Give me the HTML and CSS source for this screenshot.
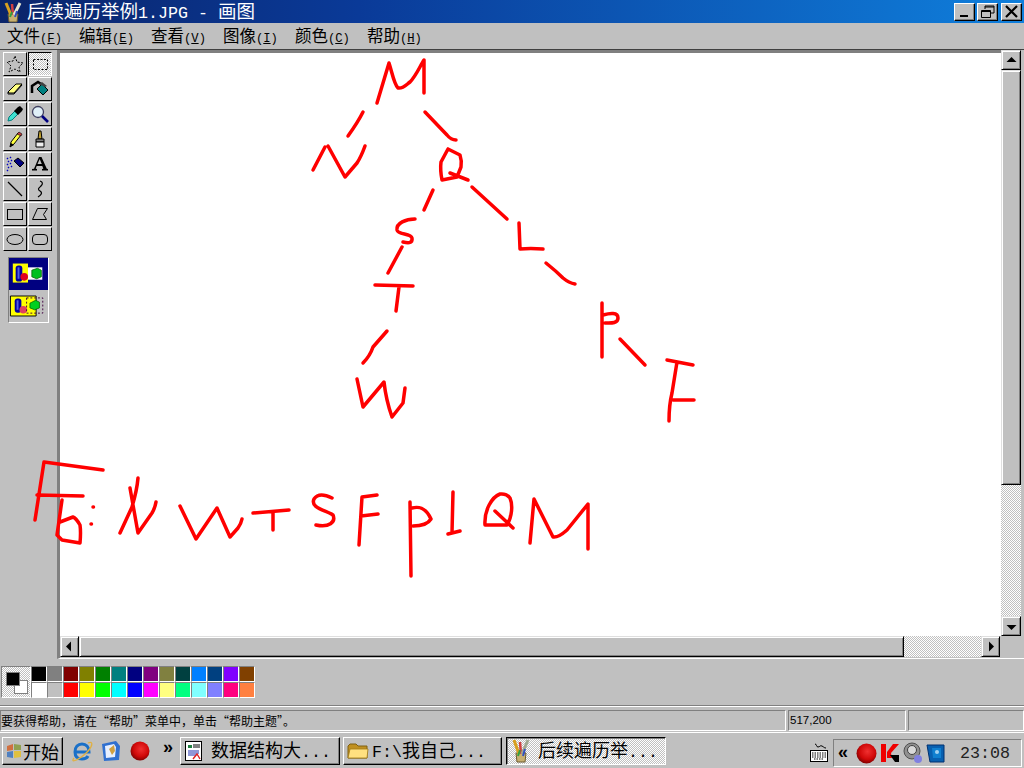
FILE: index.html
```html
<!DOCTYPE html>
<html lang="zh-CN">
<head>
<meta charset="utf-8">
<title>后续遍历举例1.JPG - 画图</title>
<link rel="stylesheet" href="styles.css">
</head>
<body>
<div class="app">
  <header class="titlebar">
    <svg class="title-icon" width="20" height="22" viewBox="0 0 20 22"><path d="M5 13h10l-1 8H6z" fill="#c8b070" stroke="#6a5a30"/><path d="M8 14L3 2" stroke="#d8a020" stroke-width="3"/><path d="M10 14L9 3" stroke="#d04040" stroke-width="2.5"/><path d="M11 14L17 2" stroke="#e8e8d0" stroke-width="3"/><path d="M7 16l2-5" stroke="#30a040" stroke-width="2"/><path d="M12 16l2-6" stroke="#3050c0" stroke-width="2"/></svg>
    <div class="title-text">后续遍历举例<span class="lat-title">1.JPG - </span>画图</div>
    <div class="win-buttons">
      <div class="win-btn"><svg width="19" height="16" viewBox="0 0 19 16"><rect x="5" y="11" width="8" height="2"/></svg></div>
      <div class="win-btn"><svg width="19" height="16" viewBox="0 0 19 16"><path d="M7 2h9v7h-3M7 2v3M7 3h9" fill="none" stroke="#000"/><path d="M3.5 6.5h9v7h-9zM3.5 7.5h9" fill="none" stroke="#000"/></svg></div>
      <div class="win-btn"><svg width="19" height="16" viewBox="0 0 19 16"><path d="M4 2l11 11M15 2L4 13" stroke="#000" stroke-width="2.2"/></svg></div>
    </div>
  </header>

  <nav class="menubar">
    <span>文件<span class="lat-menu">(<u>F</u>)</span></span>
    <span>编辑<span class="lat-menu">(<u>E</u>)</span></span>
    <span>查看<span class="lat-menu">(<u>V</u>)</span></span>
    <span>图像<span class="lat-menu">(<u>I</u>)</span></span>
    <span>颜色<span class="lat-menu">(<u>C</u>)</span></span>
    <span>帮助<span class="lat-menu">(<u>H</u>)</span></span>
  </nav>

  <main class="work">
    <aside class="toolbox">
      <div class="tools">
        <div class="tool"><svg width="20" height="20" viewBox="0 0 20 20"><path d="M10 2l2 6 6 1-4 4 1 5-5-3-6 3 2-6-4-4 6-1z" fill="none" stroke="#000" stroke-dasharray="2 1.5"/></svg></div>
        <div class="tool tool-on"><svg width="20" height="20" viewBox="0 0 20 20"><rect x="3.5" y="5.5" width="14" height="10" fill="none" stroke="#000" stroke-dasharray="2 1.5"/></svg></div>
        <div class="tool"><svg width="20" height="20" viewBox="0 0 20 20"><path d="M3 13l8-8h6l-8 9H4z" fill="#ffff80" stroke="#000"/><path d="M3 13v2h6l8-9" fill="none" stroke="#000"/></svg></div>
        <div class="tool"><svg width="20" height="20" viewBox="0 0 20 20"><path d="M2 14V7l6-4 3 2" fill="none" stroke="#000" stroke-width="2.5"/><path d="M7 10l5-5 6 6-5 5z" fill="#008080" stroke="#000"/><path d="M9 5l3-2 5 4-2 1z" fill="#404040"/></svg></div>
        <div class="tool"><svg width="20" height="20" viewBox="0 0 20 20"><path d="M3 17l1-4 6-6 3 3-6 6z" fill="#40e0d0" stroke="#008080"/><path d="M9 7l4-4 2-1 3 3-1 2-4 4z" fill="#000"/></svg></div>
        <div class="tool"><svg width="20" height="20" viewBox="0 0 20 20"><circle cx="8" cy="8" r="5.5" fill="#e0f0f8" stroke="#404060" stroke-width="1.3"/><path d="M12 12l6 6" stroke="#000080" stroke-width="2.6"/></svg></div>
        <div class="tool"><svg width="20" height="20" viewBox="0 0 20 20"><path d="M5 18l1-5 7-9 3 2-7 9z" fill="#ffff40" stroke="#000"/><path d="M5 18l1-4 3 2z" fill="#000"/><path d="M12 5l2-2 3 2-1 2z" fill="#c04040" stroke="#000" stroke-width=".6"/></svg></div>
        <div class="tool"><svg width="20" height="20" viewBox="0 0 20 20"><path d="M9 2h2l1 8H8z" fill="#c0a030" stroke="#000"/><path d="M6 10h8v3H6z" fill="#808080" stroke="#000"/><path d="M6 13h8v5H6z" fill="#f0f0f0" stroke="#000"/></svg></div>
        <div class="tool"><svg width="20" height="20" viewBox="0 0 20 20"><path d="M9 7l4-3 6 5-4 4z" fill="#000080" stroke="#000"/><path d="M2 4l1 1M5 3l1 1M3 7l1 1M6 6l1 1M2 10l1 1M5 9l1 1M3 13l1 1M6 12l1 1M2 16l1 1" stroke="#0000c0" stroke-width="1.4"/></svg></div>
        <div class="tool"><svg width="20" height="20" viewBox="0 0 20 20"><path d="M2 16.500h5v-1.500l-1.300-.2 1-2.800h5.600l1 2.800-1.300.2v1.500h6v-1.500l-1.200-.2L11.500 3H9L4 14.800l-2 .2zM7.500 10L9.700 5l2.100 5z" fill="#000"/></svg></div>
        <div class="tool"><svg width="20" height="20" viewBox="0 0 20 20"><path d="M3 3l14 14" stroke="#000" stroke-width="1.2"/></svg></div>
        <div class="tool"><svg width="20" height="20" viewBox="0 0 20 20"><path d="M10 2c3 1 3 3 1 5s-4 3-1 5 1 4-2 6" fill="none" stroke="#000" stroke-width="1.200"/></svg></div>
        <div class="tool"><svg width="20" height="20" viewBox="0 0 20 20"><rect x="2.500" y="5.500" width="15" height="10" fill="none" stroke="#000"/></svg></div>
        <div class="tool"><svg width="20" height="20" viewBox="0 0 20 20"><path d="M7.500 4.500h10l-4 6 3 5H2.500z" fill="none" stroke="#000"/></svg></div>
        <div class="tool"><svg width="20" height="20" viewBox="0 0 20 20"><ellipse cx="10" cy="10.500" rx="8" ry="5" fill="none" stroke="#000"/></svg></div>
        <div class="tool"><svg width="20" height="20" viewBox="0 0 20 20"><rect x="2.500" y="5.500" width="15" height="10" rx="3.500" fill="none" stroke="#000"/></svg></div>
      </div>
      <div class="options">
        <div class="opt opt-on">
          <svg width="41" height="30" viewBox="0 0 41 30"><path d="M4 4h16v20H4z" fill="#ffff00"/><rect x="7" y="6" width="7" height="17" rx="3" fill="#0000a0"/><rect x="9" y="8" width="2" height="12" fill="#5060e0"/><circle cx="16" cy="18" r="4" fill="#e00020"/><path d="M20 8h15v13H20z" fill="#fff"/><path d="M24 11l6-2 4 2v7l-5 2-5-2z" fill="#00c020" stroke="#006000" stroke-width=".8"/></svg>
        </div>
        <div class="opt">
          <svg width="41" height="30" viewBox="0 0 41 30"><path d="M1.500 4.500h27v21h-27z" fill="#ffff00" stroke="#000"/><rect x="6" y="7" width="7" height="15" rx="3" fill="#0000a0"/><rect x="8" y="9" width="2" height="10" fill="#5060e0"/><circle cx="15" cy="19" r="4" fill="#e04060"/><path d="M18.500 6.500h17v16h-17z" fill="none" stroke="#400040" stroke-dasharray="2 2"/><path d="M22 12l6-3 4 2v6l-5 2-5-2z" fill="#00d020" stroke="#006000" stroke-width=".8"/></svg>
        </div>
      </div>
    </aside>

    <section class="pane">
      <div class="pane-top">
        <div class="canvas"></div>
        <div class="vscroll">
          <div class="sb-btn"><svg width="17" height="17" viewBox="0 0 17 17"><path d="M8.500 5l5 5h-10z"/></svg></div>
          <div class="sb-thumb-v"></div>
          <div class="sb-track"></div>
          <div class="sb-btn"><svg width="17" height="17" viewBox="0 0 17 17"><path d="M8.500 12l-5-5h10z"/></svg></div>
        </div>
      </div>
      <div class="hscroll">
        <div class="sb-btn sb-btn-h"><svg width="17" height="17" viewBox="0 0 17 17"><path d="M5 8.500l5-5v10z"/></svg></div>
        <div class="sb-thumb-h"></div>
        <div class="sb-track"></div>
        <div class="sb-btn sb-btn-h"><svg width="17" height="17" viewBox="0 0 17 17"><path d="M12 8.500l-5-5v10z"/></svg></div>
      </div>
    </section>
  </main>

  <section class="palette">
    <div class="current"><i class="cur-bg"></i><i class="cur-fg"></i></div>
    <div class="swatches">
      <i class="c1"></i><i class="c2"></i><i class="c3"></i><i class="c4"></i><i class="c5"></i><i class="c6"></i><i class="c7"></i><i class="c8"></i><i class="c9"></i><i class="c10"></i><i class="c11"></i><i class="c12"></i><i class="c13"></i><i class="c14"></i>
      <i class="c15"></i><i class="c16"></i><i class="c17"></i><i class="c18"></i><i class="c19"></i><i class="c20"></i><i class="c21"></i><i class="c22"></i><i class="c23"></i><i class="c24"></i><i class="c25"></i><i class="c26"></i><i class="c27"></i><i class="c28"></i>
    </div>
  </section>

  <footer class="status">
    <div class="st st-main">要获得帮助&#65292;请在“帮助”菜单中&#65292;单击“帮助主题”。</div>
    <div class="st st-pos">517,200</div>
    <div class="st st-size"></div>
  </footer>

  <div class="taskbar">
    <button class="start">
      <svg width="18" height="18" viewBox="0 0 18 18"><path d="M2 4l6-2v6l-6 1z" fill="#d07040"/><path d="M9 2l7 1v5H9z" fill="#90a050"/><path d="M2 10l6-1v7l-6-1z" fill="#5080c0"/><path d="M9 9h7v6l-7 1z" fill="#e0c040"/></svg>
      <span>开始</span>
    </button>
    <div class="quick">
      <svg width="22" height="24" viewBox="0 0 22 24"><path d="M5 13h13c0-5-3-8-7-8s-7 3-7 8 3 7 7 7c3 0 5-1 6-3" fill="none" stroke="#1a70c8" stroke-width="3"/><path d="M3 19C-1 24 6 22 14 15S23 1 17 4" fill="none" stroke="#e0b040" stroke-width="1.300"/></svg>
      <svg width="22" height="24" viewBox="0 0 22 24"><path d="M2 5l14-3 4 5-1 14-15 1z" fill="#3070d0"/><path d="M5 7l9-2 2 3-1 10-9 1z" fill="#e8f0ff"/><path d="M9 10l5-4 1 6-3 4z" fill="#d0a040"/></svg>
      <svg width="22" height="24" viewBox="0 0 22 24"><circle cx="11" cy="12" r="9.500" fill="url(#ball)"/><defs><radialGradient id="ball" cx=".55" cy=".4" r=".65"><stop offset="0" stop-color="#f03030"/><stop offset=".6" stop-color="#d00808"/><stop offset="1" stop-color="#700000"/></radialGradient></defs></svg>
    </div>
    <div class="chev">»</div>
    <button class="task task-1">
      <svg width="18" height="20" viewBox="0 0 18 20"><rect x=".5" y=".5" width="16" height="19" fill="#fff" stroke="#000"/><path d="M3 4h4v3H3z" fill="#208040"/><path d="M8 4h7M8 6h7" stroke="#000"/><path d="M3 10h11M3 12h11M3 14h8" stroke="#2030b0" stroke-width="1.200"/><path d="M8 18l4-5 3 5" fill="none" stroke="#e02020" stroke-width="1.400"/></svg>
      <span>数据结构大<span class="lat-task">...</span></span>
    </button>
    <button class="task task-2">
      <svg width="22" height="18" viewBox="0 0 22 18"><path d="M1 4l2-2h6l2 2h9v12H1z" fill="#c09020" stroke="#806010"/><path d="M1 16l2-9h18l-1 9z" fill="#ffe080" stroke="#a07818" stroke-width=".8"/></svg>
      <span class="task-label-tight"><span class="lat-task">F:\</span>我自己<span class="lat-task">...</span></span>
    </button>
    <button class="task task-3">
      <svg width="20" height="26" viewBox="0 0 20 26"><path d="M5 15h10l-1 9H6z" fill="#c8b070" stroke="#6a5a30"/><path d="M8 16L3 2" stroke="#d8a020" stroke-width="3"/><path d="M10 16L9 4" stroke="#d04040" stroke-width="2.500"/><path d="M11 16l6-14" stroke="#a0a890" stroke-width="3"/><path d="M7 18l2-6" stroke="#30a040" stroke-width="2"/><path d="M12 18l2-7" stroke="#3050c0" stroke-width="2"/></svg>
      <span>后续遍历举<span class="lat-task">...</span></span>
    </button>
    <div class="spring"></div>
    <svg class="kbd" width="18" height="20" viewBox="0 0 18 20"><path d="M5 1c2 0 1 3 3 3s2-2 4-1 2 2 4 2" fill="none" stroke="#000"/><rect x=".5" y="7.500" width="17" height="11" fill="#fff" stroke="#000"/><path d="M2 10h14M2 12h14M2 14h14M4 16h10" stroke="#000" stroke-dasharray="1.500 1"/></svg>
    <div class="tray">
      <span class="tray-chev">«</span>
      <svg width="21" height="21" viewBox="0 0 21 21"><circle cx="10.500" cy="10.500" r="10" fill="url(#ball)"/></svg>
      <svg width="20" height="20" viewBox="0 0 20 20"><path d="M1 1h5v18H1zM7 9l6-8h6l-8 9 1 5H7z" fill="#f00000"/><path d="M10 12h9v7h-4z" fill="#000"/></svg>
      <svg width="20" height="22" viewBox="0 0 20 22"><circle cx="9" cy="9" r="8" fill="#909090" stroke="#505050"/><circle cx="9" cy="8" r="4.500" fill="#d8d8d8" stroke="#404040"/><circle cx="15" cy="17" r="4" fill="#8080e0"/></svg>
      <svg width="20" height="22" viewBox="0 0 20 22"><path d="M1 3h17v17H4z" fill="#0860b0" stroke="#003070"/><path d="M6 6h9v10H7z" fill="#1080d0"/><circle cx="11" cy="10" r="2" fill="#a0d0f0"/></svg>
      <span class="clock">23:08</span>
    </div>
  </div>

  <svg class="ink" width="1024" height="768" viewBox="0 0 1024 768">
    <path d="M377 103L389 63C392 72 394 84 398 88 403 89 406 85 410 82 416 76 420 66 424 60L424 93"/>
    <path d="M363 112Q358 122 348 136"/>
    <path d="M425 112L447 135Q451 140 456 140"/>
    <path d="M313 170L325 147M328 146L345 177 357 163Q361 157 365 146"/>
    <path d="M448 149L460 155Q462 161 461 167L457 177 442 180Q440 170 441 162L448 149M450 173L468 180"/>
    <path d="M433 190L424 210"/>
    <path d="M472 187L507 219"/>
    <path d="M415 219C406 219 396 223 397 230 398 235 411 233 412 238 413 244 407 243 403 242"/>
    <path d="M519 223L520 249Q530 248 543 249"/>
    <path d="M402 247L388 273"/>
    <path d="M375 285L413 286M399 287L396 311"/>
    <path d="M546 263Q556 271 563 278 569 283 575 284"/>
    <path d="M602 303L602 357M603 315C610 313 618 312 618 318 618 324 610 323 605 323"/>
    <path d="M620 339L645 365"/>
    <path d="M667 360L693 365M677 362L672 393Q669 405 669 421M673 400L694 400"/>
    <path d="M387 331L373 347Q370 356 363 363"/>
    <path d="M357 379L363 407 384 382Q386 400 392 417L403 403 405 388"/>
    <path d="M103 470L44 462 35 520M37 495L83 496"/>
    <path d="M62 500L57 535 62 540 80 543Q81 532 80 525 76 518 73 517L60 522"/>
    <path d="M93 507h.5M91 524h.5"/>
    <path d="M120 533L132 507Q137 490 138 478M130 488L138 533 152 513Q155 508 156 502"/>
    <path d="M180 506L196 539 217 508 230 537 238 528Q241 524 242 519"/>
    <path d="M253 513L289 510M273 512L273 530"/>
    <path d="M332 498C326 495 318 493 314 499 310 508 325 510 333 515 336 522 329 528 316 525"/>
    <path d="M377 495L362 497 359 545M361 516L378 514"/>
    <path d="M410 502L411 576M412 508C420 506 426 508 431 519 428 524 420 526 413 526"/>
    <path d="M453 492L452 533M448 534L460 531"/>
    <path d="M500 494C492 497 484 510 485 525L507 525C512 517 513 505 510 498 506 493 503 494 500 494M495 511L513 528"/>
    <path d="M530 543L534 499 553 537Q558 538 567 530L588 504 588 549"/>
  </svg>
</div>
</body>
</html>
```

FILE: styles.css
```css
* { box-sizing: border-box; }
html, body { margin: 0; padding: 0; }
body { background: #c0c0c0; overflow: hidden; }

.app {
  position: relative;
  width: 1024px;
  height: 768px;
  display: flex;
  flex-direction: column;
  overflow: hidden;
  background: #c0c0c0;
  color: #000;
  font-family: "Noto Sans CJK SC", "Liberation Sans", sans-serif;
}

/* ---- title bar ---- */
.titlebar {
  height: 23px;
  flex: none;
  display: flex;
  align-items: center;
  padding: 0 2px 0 3px;
  background: linear-gradient(90deg, #0a246a 0%, #0a3a98 35%, #0f7fdc 100%);
  color: #fff;
}
.title-icon { flex: none; }
.title-text {
  margin-left: 4px;
  font-size: 18.500px;
  line-height: 23px;
  white-space: pre;
}
.lat-title { font-family: "Liberation Mono", monospace; font-size: 16.670px; }
.win-buttons { margin-left: auto; display: flex; gap: 2px; }
.win-btn {
  width: 21px;
  height: 18px;
  background: #c0c0c0;
  border: 1px solid;
  border-color: #fff #000 #000 #fff;
  box-shadow: inset -1px -1px #808080;
  display: flex;
  align-items: center;
  justify-content: center;
}
.win-btn + .win-btn + .win-btn { margin-left: 1px; }

/* ---- menu ---- */
.menubar {
  height: 25px;
  flex: none;
  margin-top: 1px;
  display: flex;
  align-items: center;
  gap: 17px;
  padding-left: 7px;
  font-size: 16.500px;
  line-height: 24px;
  white-space: nowrap;
}
.lat-menu { font-family: "Liberation Mono", monospace; font-size: 12.200px; }

/* ---- work area ---- */
.work {
  height: 610px;
  flex: none;
  display: flex;
  border-top: 1px solid #404040;
}
.toolbox { width: 57px; flex: none; padding: 2px 0 0 3px; }
.tools {
  display: grid;
  grid-template-columns: 24px 24px;
  grid-auto-rows: 24px;
  gap: 1px;
  width: 49px;
}
.tool {
  background: #c0c0c0;
  border: 1px solid;
  border-color: #fff #000 #000 #fff;
  display: flex;
  align-items: center;
  justify-content: center;
}
.tool-on {
  border-color: #000 #fff #fff #000;
  background: repeating-conic-gradient(#fff 0 25%, #c0c0c0 0 50%) 0 0 / 2px 2px;
}
.options {
  width: 41px;
  margin: 6px 0 0 5px;
  height: 66px;
  border: 1px solid;
  border-color: #808080 #fff #fff #808080;
  display: flex;
  flex-direction: column;
}
.opt { height: 32px; display: flex; align-items: center; justify-content: center; }
.opt-on { background: #000080; }

.pane {
  flex: 1;
  display: flex;
  flex-direction: column;
  padding-bottom: 1px;
  border-left: 3px solid #808080;
  border-bottom: 1px solid #fff;
}
.pane-top { flex: 1; display: flex; min-height: 0; }
.canvas {
  width: 941px;
  flex: none;
  background: #fff;
  border-top: 3px solid #808080;
}
.vscroll { width: 20px; flex: none; display: flex; flex-direction: column; }
.sb-btn {
  height: 20px;
  flex: none;
  background: #c0c0c0;
  border: 1px solid;
  border-color: #dfdfdf #000 #000 #dfdfdf;
  box-shadow: inset 1px 1px #fff, inset -1px -1px #808080;
  display: flex;
  align-items: center;
  justify-content: center;
}
.sb-track {
  flex: 1;
  background: repeating-conic-gradient(#fff 0 25%, #c0c0c0 0 50%) 0 0 / 2px 2px;
}
.sb-thumb-v, .sb-thumb-h {
  flex: none;
  background: #c0c0c0;
  border: 1px solid;
  border-color: #dfdfdf #000 #000 #dfdfdf;
  box-shadow: inset 1px 1px #fff, inset -1px -1px #808080;
}
.sb-thumb-v { height: 415px; }
.sb-thumb-h { width: 825px; }
.hscroll { height: 21px; flex: none; display: flex; margin-right: 24px; }
.sb-btn-h { width: 19px; height: 21px; }

/* ---- palette ---- */
.palette {
  height: 47px;
  flex: none;
  display: flex;
  padding: 7px 0 0 1px;
  border-bottom: 1px solid #808080;
}
.current {
  position: relative;
  width: 30px;
  height: 32px;
  border: 1px solid;
  border-color: #808080 #fff #fff #808080;
  background: repeating-conic-gradient(#fff 0 25%, #c0c0c0 0 50%) 0 0 / 2px 2px;
}
.cur-bg, .cur-fg { position: absolute; display: block; width: 14px; height: 14px; }
.cur-bg { left: 12px; top: 13px; background: #fff; border: 1px solid #808080; }
.cur-fg { left: 4px; top: 5px; background: #000; border: 1px solid #808080; }
.swatches {
  display: grid;
  grid-template-columns: repeat(14, 16px);
  grid-auto-rows: 16px;
  height: 32px;
}
.swatches i {
  display: block;
  border: 1px solid;
  border-color: #808080 #fff #fff #808080;
}
.c1 { background: #000; } .c2 { background: #808080; } .c3 { background: #800000; } .c4 { background: #808000; }
.c5 { background: #008000; } .c6 { background: #008080; } .c7 { background: #000080; } .c8 { background: #800080; }
.c9 { background: #808040; } .c10 { background: #004040; } .c11 { background: #0080ff; } .c12 { background: #004080; }
.c13 { background: #8000ff; } .c14 { background: #804000; }
.c15 { background: #fff; } .c16 { background: #c0c0c0; } .c17 { background: #f00; } .c18 { background: #ff0; }
.c19 { background: #0f0; } .c20 { background: #0ff; } .c21 { background: #00f; } .c22 { background: #f0f; }
.c23 { background: #ffff80; } .c24 { background: #00ff80; } .c25 { background: #80ffff; } .c26 { background: #8080ff; }
.c27 { background: #ff0080; } .c28 { background: #ff8040; }

/* ---- status bar ---- */
.status {
  height: 26px;
  flex: none;
  display: flex;
  gap: 2px;
  padding-top: 3px;
  border-top: 1px solid #fff;
}
.st {
  height: 21px;
  border: 1px solid;
  border-color: #808080 #fff #fff #808080;
  font-size: 12px;
  line-height: 19px;
  white-space: nowrap;
}
.st-main { width: 786px; }
.st-pos { width: 118px; padding-left: 1px; font-family: "Liberation Sans", sans-serif; font-size: 11.500px; }
.st-size { flex: 1; }

/* ---- taskbar ---- */
.taskbar {
  flex: 1;
  display: flex;
  align-items: center;
  padding: 2px 2px 6px 2px;
  border-top: 1px solid #fff;
  font-size: 18px;
}
.start, .task {
  height: 28px;
  padding: 0;
  background: #c0c0c0;
  border: 1px solid;
  border-color: #fff #000 #000 #fff;
  box-shadow: inset -1px -1px #808080;
  display: flex;
  align-items: center;
  font: inherit;
  line-height: 26px;
  white-space: nowrap;
  color: #000;
}
.start { width: 61px; padding-left: 2px; gap: 0; }
.quick { display: flex; gap: 7px; margin-left: 8px; width: 92px; }
.chev { width: 15px; font-family: "Liberation Sans", sans-serif; font-weight: bold; font-size: 18px; line-height: 18px; margin-top: -8px; }
.task { gap: 8px; }
.task-1 { width: 160px; margin-left: 2px; padding-left: 4px; }
.task-2 { width: 159px; margin-left: 3px; padding-left: 3px; gap: 7px; }
.task-3 {
  width: 160px;
  margin-left: 4px;
  padding-left: 4px;
  gap: 7px;
  border-color: #000 #fff #fff #000;
  box-shadow: inset 1px 1px #808080;
  background: repeating-conic-gradient(#fff 0 25%, #c0c0c0 0 50%) 0 0 / 2px 2px;
}
.task-label-tight { margin-left: -4px; }
.lat-task { font-family: "Liberation Mono", monospace; font-size: 16.670px; }
.spring { flex: 1; }
.kbd { flex: none; margin-right: 5px; margin-top: 4px; }
.tray {
  width: 189px;
  height: 28px;
  margin-top: 4px;
  display: flex;
  align-items: center;
  gap: 3px;
  padding-left: 4px;
  border: 1px solid;
  border-color: #808080 #fff #fff #808080;
}
.tray-chev { width: 15px; font-family: "Liberation Sans", sans-serif; font-weight: bold; font-size: 18px; line-height: 22px; margin-top: -3px; }
.clock { margin-left: 11px; font-family: "Liberation Mono", monospace; font-size: 16.670px; color: #222; }

/* ---- hand-drawn picture over the window ---- */
.ink {
  position: absolute;
  left: 0;
  top: 0;
  fill: none;
  stroke: #f00;
  stroke-width: 3.500;
  stroke-linecap: round;
  stroke-linejoin: round;
  pointer-events: none;
}
```
